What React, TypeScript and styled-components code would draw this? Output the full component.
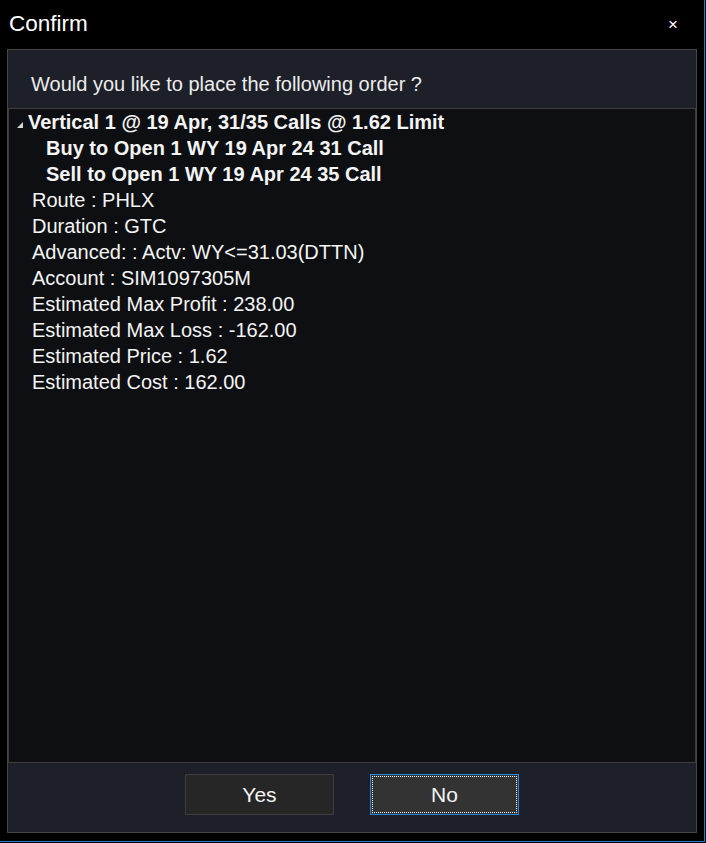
import { createGlobalStyle } from "styled-components";
import styled from "styled-components";

const GlobalStyle = createGlobalStyle`
  html, body {
    margin: 0;
    padding: 0;
    background: #000;
  }
  body {
    font-family: "Liberation Sans", Arial, sans-serif;
    color: #f2f2f2;
  }
`;

const Frame = styled.div`
  width: 704px;
  height: 841px;
  border-right: 1px solid #1f7fd6;
  border-bottom: 1px solid #1f7fd6;
  background: #000;
  display: flex;
  flex-direction: column;
`;

const TitleBar = styled.div`
  height: 49px;
  display: flex;
  align-items: center;
  justify-content: space-between;
  padding: 0 26px 2px 9px;
  box-sizing: border-box;
`;

const Title = styled.div`
  font-size: 22.5px;
  color: #fff;
`;

const Close = styled.div`
  font-size: 17px;
  color: #fff;
  line-height: 1;
  padding-top: 1px;
`;

const Panel = styled.div`
  margin-left: 7px;
  width: 690px;
  height: 784px;
  box-sizing: border-box;
  border: 1px solid #454545;
  background: #1e2029;
  display: flex;
  flex-direction: column;
`;

const Question = styled.div`
  height: 58px;
  padding: 11px 0 0 23px;
  box-sizing: border-box;
  display: flex;
  align-items: center;
  font-size: 20px;
  color: #ececec;
`;

const OrderList = styled.div`
  height: 655px;
  box-sizing: border-box;
  border: 1px solid #3c3c3c;
  background: #0e0f12;
`;

const Line = styled.div<{ $indent: number; $bold?: boolean }>`
  height: 26px;
  line-height: 26px;
  padding-left: ${(p) => p.$indent}px;
  font-size: 20px;
  font-weight: ${(p) => (p.$bold ? 700 : 400)};
  color: #f4f4f4;
  white-space: nowrap;
  display: flex;
  align-items: center;
`;

const Expander = styled.svg`
  width: 6px;
  height: 6px;
  margin: 5px 5px 0 0;
`;

const Footer = styled.div`
  flex: 1;
  display: flex;
  justify-content: center;
  align-items: flex-start;
  gap: 36px;
  padding-top: 11px;
`;

const Button = styled.button<{ $focused?: boolean }>`
  position: relative;
  width: 149px;
  height: 41px;
  box-sizing: border-box;
  font-family: "Liberation Sans", Arial, sans-serif;
  font-size: 21px;
  color: #f4f4f4;
  background: ${(p) => (p.$focused ? "#333333" : "#262626")};
  border: 1px solid ${(p) => (p.$focused ? "#2388e0" : "#3d3d3d")};
  padding: 0;
  cursor: pointer;
  &::after {
    content: "";
    display: ${(p) => (p.$focused ? "block" : "none")};
    position: absolute;
    inset: 1px;
    border: 1px dotted #ffffff;
  }
`;

const legs = [
  "Buy to Open 1 WY 19 Apr 24 31 Call",
  "Sell to Open 1 WY 19 Apr 24 35 Call",
];

const details = [
  "Route : PHLX",
  "Duration : GTC",
  "Advanced: : Actv: WY<=31.03(DTTN)",
  "Account : SIM1097305M",
  "Estimated Max Profit : 238.00",
  "Estimated Max Loss : -162.00",
  "Estimated Price : 1.62",
  "Estimated Cost : 162.00",
];

export default function App() {
  return (
    <>
      <GlobalStyle />
      <Frame>
        <TitleBar>
          <Title>Confirm</Title>
          <Close>×</Close>
        </TitleBar>
        <Panel>
          <Question>Would you like to place the following order ?</Question>
          <OrderList>
            <Line $indent={8} $bold>
              <Expander viewBox="0 0 6 6">
                <polygon points="6,0 6,6 0,6" fill="#d8d8d8" />
              </Expander>
              Vertical 1 @ 19 Apr, 31/35 Calls @ 1.62 Limit
            </Line>
            {legs.map((leg) => (
              <Line key={leg} $indent={37} $bold>
                {leg}
              </Line>
            ))}
            {details.map((d) => (
              <Line key={d} $indent={23}>
                {d}
              </Line>
            ))}
          </OrderList>
          <Footer>
            <Button>Yes</Button>
            <Button $focused>No</Button>
          </Footer>
        </Panel>
      </Frame>
    </>
  );
}
